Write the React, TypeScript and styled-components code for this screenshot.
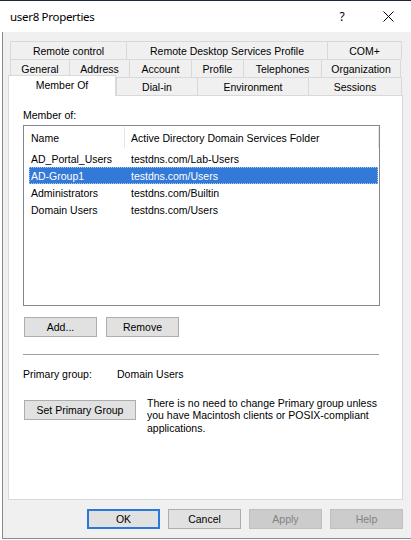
import React from "react";
import styled, { createGlobalStyle, css } from "styled-components";

const GlobalStyle = createGlobalStyle`
  html, body { margin: 0; padding: 0; background: #ffffff; }
  body { font-family: "Liberation Sans", Arial, sans-serif; font-size: 10.5px; color: #000; }
  * { box-sizing: border-box; }
`;

const Screen = styled.div`
  width: 411px;
  height: 540px;
  background: #ffffff;
  overflow: hidden;
`;

const Window = styled.div`
  width: 411px;
  border-top: 1px solid #1c2737;
  display: flex;
  flex-direction: column;
`;

const TitleBar = styled.div`
  height: 31px;
  background: #ffffff;
  display: flex;
  align-items: center;
`;

const Title = styled.div`
  flex: 1;
  padding-left: 10px;
  font-family: "Noto Sans", "Liberation Sans", sans-serif;
  font-size: 11.5px;
  letter-spacing: -0.3px;
  color: #000;
`;

const CaptionButton = styled.div`
  width: 46px;
  height: 31px;
  display: flex;
  align-items: center;
  justify-content: center;
  font-family: "Noto Sans", "Liberation Sans", sans-serif;
  font-size: 12px;
  color: #000;
`;

const Body = styled.div`
  margin-left: 2px;
  height: 507px;
  background: #f0f0f0;
  border-left: 1px solid #8a8a8a;
  border-bottom: 1px solid #8a8a8a;
  padding: 9px 8px 0 5px;
  display: flex;
  flex-direction: column;
`;

const TabStrip = styled.div`
  display: flex;
  flex-direction: column;
`;

const TabRow = styled.div<{ $inset?: number }>`
  display: flex;
  height: 18px;
  padding-left: ${(p) => p.$inset ?? 0}px;
  align-items: flex-end;
`;

const Tab = styled.div<{ $w: number; $selected?: boolean }>`
  width: ${(p) => p.$w}px;
  height: 18px;
  border: 1px solid #d9d9d9;
  border-bottom: none;
  margin-right: -1px;
  background: #f0f0f0;
  display: flex;
  align-items: center;
  justify-content: center;
  white-space: nowrap;
  font-size: 10.5px;
  color: #000;
  ${(p) =>
    p.$selected &&
    css`
      position: relative;
      z-index: 2;
      height: 21px;
      margin-bottom: -1px;
      background: #ffffff;
      align-items: flex-start;
      padding-top: 3px;
      margin-right: 0;
    `}
`;

const Panel = styled.div`
  height: 405px;
  background: #ffffff;
  border: 1px solid #d9d9d9;
  padding: 13px 0 0 14px;
  display: flex;
  flex-direction: column;
`;

const Label = styled.div`
  height: 13px;
  line-height: 13px;
  white-space: nowrap;
`;

const ListBox = styled.div`
  margin-top: 3px;
  width: 357px;
  height: 181px;
  border: 1px solid #828790;
  background: #ffffff;
  display: flex;
  flex-direction: column;
`;

const HeaderRow = styled.div`
  height: 24px;
  display: flex;
  align-items: stretch;
`;

const HeaderCell = styled.div<{ $w: number; $pad: number }>`
  width: ${(p) => p.$w}px;
  padding-left: ${(p) => p.$pad}px;
  display: flex;
  align-items: center;
  border-right: 1px solid #e5e5e5;
  margin: 1px 0 2px;
  white-space: nowrap;
`;

const Row = styled.div<{ $selected?: boolean }>`
  margin-left: 5px;
  width: 349px;
  height: 17px;
  display: flex;
  align-items: center;
  white-space: nowrap;
  ${(p) =>
    p.$selected &&
    css`
      background: #3379d7;
      color: #ffffff;
      outline: 1px dotted #a9c8f0;
      outline-offset: -1px;
    `}
`;

const Cell = styled.div<{ $w: number; $pad: number }>`
  width: ${(p) => p.$w}px;
  padding-left: ${(p) => p.$pad}px;
`;

const Button = styled.button<{ $w?: number; $default?: boolean }>`
  width: ${(p) => p.$w ?? 73}px;
  height: 20px;
  padding: 0;
  background: #e1e1e1;
  border: 1px solid #adadad;
  font-family: "Liberation Sans", Arial, sans-serif;
  font-size: 10.5px;
  color: #000;
  display: flex;
  align-items: center;
  justify-content: center;
  flex-shrink: 0;
  ${(p) =>
    p.$default &&
    css`
      border: 2px solid #2b79d6;
    `}
  &:disabled {
    background: #cccccc;
    border-color: #bfbfbf;
    color: #838383;
  }
`;

const ButtonRow = styled.div<{ $gap: number }>`
  display: flex;
  gap: ${(p) => p.$gap}px;
`;

const ListButtons = styled(ButtonRow)`
  margin-top: 11px;
  margin-left: 1px;
`;

const Separator = styled.div`
  margin-top: 17px;
  width: 356px;
  height: 1px;
  background: #a0a0a0;
`;

const InfoRow = styled.div`
  margin-top: 13px;
  display: flex;
  height: 13px;
  line-height: 13px;
`;

const InfoLabel = styled.div`
  width: 94px;
`;

const PrimaryRow = styled.div`
  margin-top: 19px;
  margin-left: 1px;
  display: flex;
  align-items: flex-start;
  gap: 11px;
`;

const Note = styled.div`
  margin-top: -3.5px;
  line-height: 12.5px;
  width: 240px;
`;

const DialogButtons = styled(ButtonRow)`
  margin-top: 9px;
  justify-content: flex-end;
`;

const CloseIcon = () => (
  <svg width="11" height="11" viewBox="0 0 11 11">
    <path d="M0.5 0.5 L10.5 10.5 M10.5 0.5 L0.5 10.5" stroke="#000" strokeWidth="1" fill="none" />
  </svg>
);

const rows = [
  ["AD_Portal_Users", "testdns.com/Lab-Users"],
  ["AD-Group1", "testdns.com/Users"],
  ["Administrators", "testdns.com/Builtin"],
  ["Domain Users", "testdns.com/Users"],
];

export default function App() {
  return (
    <>
      <GlobalStyle />
      <Screen>
        <Window>
          <TitleBar>
            <Title>user8 Properties</Title>
            <CaptionButton>?</CaptionButton>
            <CaptionButton>
              <CloseIcon />
            </CaptionButton>
          </TitleBar>
          <Body>
            <TabStrip>
              <TabRow $inset={2}>
                <Tab $w={117}>Remote control</Tab>
                <Tab $w={202}>Remote Desktop Services Profile</Tab>
                <Tab $w={75}>COM+</Tab>
              </TabRow>
              <TabRow $inset={2}>
                <Tab $w={60}>General</Tab>
                <Tab $w={61}>Address</Tab>
                <Tab $w={63}>Account</Tab>
                <Tab $w={53}>Profile</Tab>
                <Tab $w={79}>Telephones</Tab>
                <Tab $w={80}>Organization</Tab>
              </TabRow>
              <TabRow>
                <Tab $w={108} $selected>
                  Member Of
                </Tab>
                <Tab $w={82}>Dial-in</Tab>
                <Tab $w={112}>Environment</Tab>
                <Tab $w={94}>Sessions</Tab>
              </TabRow>
            </TabStrip>
            <Panel>
              <Label>Member of:</Label>
              <ListBox>
                <HeaderRow>
                  <HeaderCell $w={101} $pad={7}>
                    Name
                  </HeaderCell>
                  <HeaderCell $w={254} $pad={6}>
                    Active Directory Domain Services Folder
                  </HeaderCell>
                </HeaderRow>
                {rows.map(([name, folder], i) => (
                  <Row key={name} $selected={i === 1}>
                    <Cell $w={102} $pad={2}>
                      {name}
                    </Cell>
                    <Cell $w={247} $pad={0}>
                      {folder}
                    </Cell>
                  </Row>
                ))}
              </ListBox>
              <ListButtons $gap={9}>
                <Button>Add...</Button>
                <Button>Remove</Button>
              </ListButtons>
              <Separator />
              <InfoRow>
                <InfoLabel>Primary group:</InfoLabel>
                <div>Domain Users</div>
              </InfoRow>
              <PrimaryRow>
                <Button $w={112}>Set Primary Group</Button>
                <Note>
                  There is no need to change Primary group unless you have Macintosh clients or
                  POSIX-compliant applications.
                </Note>
              </PrimaryRow>
            </Panel>
            <DialogButtons $gap={8}>
              <Button $default>OK</Button>
              <Button>Cancel</Button>
              <Button disabled>Apply</Button>
              <Button disabled>Help</Button>
            </DialogButtons>
          </Body>
        </Window>
      </Screen>
    </>
  );
}
